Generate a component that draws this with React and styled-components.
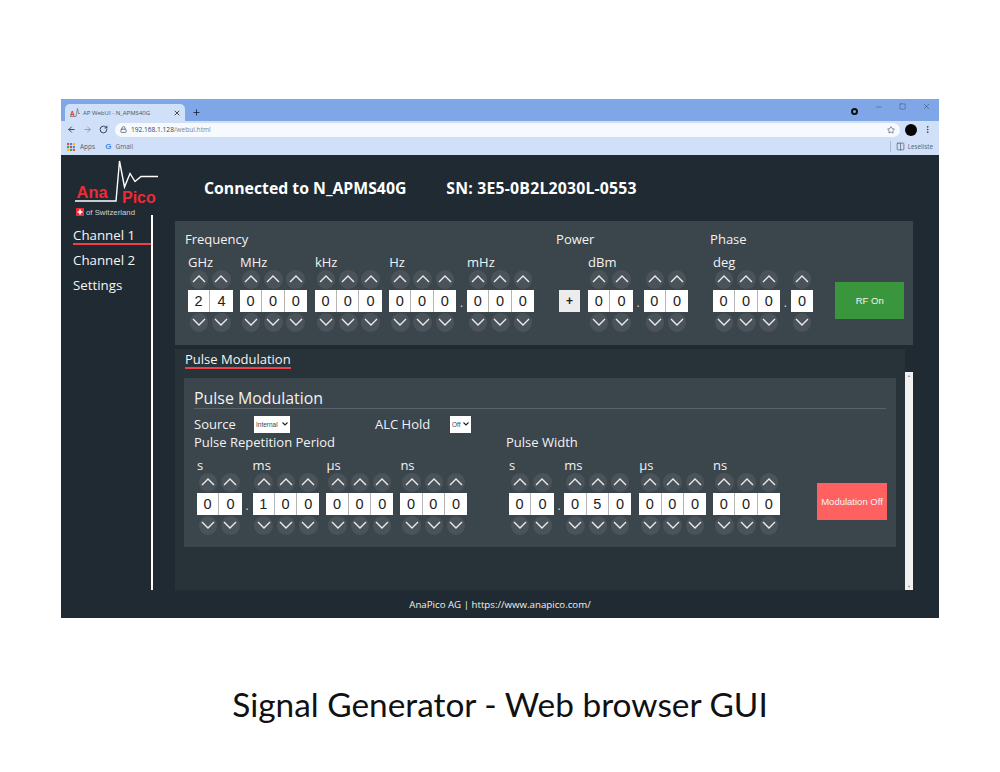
import React from "react";
import styled, { createGlobalStyle } from "styled-components";
import { ArrowLeft, ArrowRight, RotateCw, Lock, Star, X, Plus, Minus, Square, Columns2, EllipsisVertical } from "lucide-react";

const Global = createGlobalStyle`
  html, body { margin: 0; padding: 0; background: #fff; }
  body { font-family: "Open Sans", "Noto Sans", sans-serif; }
`;

const Page = styled.div`
  width: 1000px;
  height: 772px;
  padding-top: 99px;
  box-sizing: border-box;
  overflow: hidden;
`;
const Screen = styled.div`
  width: 878px;
  height: 519px;
  margin-left: 61px;
  display: flex;
  flex-direction: column;
`;
const Caption = styled.div`
  margin-top: 66px;
  text-align: center;
  font-family: Lato, "Liberation Sans", sans-serif;
  font-size: 33.4px;
  line-height: 40px;
  color: #111;
`;

/* browser chrome */
const TabStrip = styled.div`
  height: 22px;
  background: #7fa7e7;
  display: flex;
  align-items: flex-end;
  padding-left: 4px;
  color: #26364d;
  flex: none;
`;
const BrowserTab = styled.div`
  width: 120px;
  height: 17px;
  background: #cfe0f8;
  border-radius: 5px 5px 0 0;
  display: flex;
  align-items: center;
  padding: 0 4px 0 5px;
  box-sizing: border-box;
  font-size: 6px;
  color: #4a5564;
  gap: 3px;
`;
const TabTitle = styled.span`
  flex: 1;
  white-space: nowrap;
`;
const NewTab = styled.span`
  display: flex;
  margin: 0 0 4px 7px;
  color: #1c2a40;
`;
const StripSpacer = styled.div`
  flex: 1;
`;
const ExtIcon = styled.span`
  width: 3px;
  height: 3px;
  border: 2.5px solid #111;
  border-radius: 50%;
  margin: 0 17px 6px 0;
`;
const WinControls = styled.div`
  display: flex;
  align-self: flex-start;
  align-items: center;
  gap: 16px;
  margin: 3px 8px 0 0;
  color: #33465f;
`;
const AddressRow = styled.div`
  height: 17px;
  background: #cfe0f8;
  display: flex;
  align-items: center;
  padding-left: 6px;
  color: #3a4656;
  flex: none;
`;
const NavIcons = styled.div`
  display: flex;
  gap: 7px;
`;
const Omnibox = styled.div`
  width: 785px;
  height: 14px;
  margin-left: 7px;
  border-radius: 7px;
  background: #f6f9fe;
  display: flex;
  align-items: center;
  padding: 0 5px 0 5px;
  box-sizing: border-box;
  font-size: 6.6px;
  gap: 4px;
  color: #7a8492;
`;
const Host = styled.span`
  color: #3b4450;
`;
const OmniSpacer = styled.span`
  flex: 1;
`;
const Avatar = styled.span`
  width: 12px;
  height: 12px;
  border-radius: 50%;
  background: #050505;
  margin-left: 5px;
`;
const MenuDots = styled.span`
  display: flex;
  margin-left: 6px;
`;
const Bookmarks = styled.div`
  height: 17px;
  background: #cfe0f8;
  display: flex;
  align-items: center;
  padding-left: 6px;
  font-size: 6.5px;
  color: #596474;
  flex: none;
`;
const AppsGrid = styled.svg`
  width: 8px;
  height: 8px;
  margin-right: 5px;
`;
const GoogleG = styled.span`
  font-family: "Liberation Sans", sans-serif;
  font-weight: 700;
  font-size: 8px;
  color: #4285f4;
  margin: 0 4px 0 10px;
`;
const Reading = styled.div`
  margin-left: auto;
  display: flex;
  align-items: center;
  gap: 3px;
  padding-left: 5px;
  margin-right: 6px;
  border-left: 1px solid #a9b7cb;
  height: 11px;
  font-size: 6.3px;
`;

/* web app */
const AppArea = styled.div`
  flex: 1;
  background: #1f2a33;
  display: flex;
  flex-direction: column;
  color: #f2f2f2;
  min-height: 0;
`;
const AppBody = styled.div`
  flex: 1;
  display: flex;
  min-height: 0;
`;
const Side = styled.div`
  width: 114px;
  flex: none;
`;
const LogoSvg = styled.svg`
  display: block;
  width: 100px;
  height: 60px;
  overflow: visible;
`;
const SideNav = styled.nav`
  width: 92px;
  box-sizing: border-box;
  height: 375px;
  border-right: 2px solid #fff;
  padding-top: 10px;
`;
const NavItem = styled.div`
  margin: 0 0 5px 12px;
  font-size: 13.3px;
  line-height: 20px;
  height: 20px;
  box-sizing: border-box;
  color: #f5f5f5;
  ${(p) => p.$active && "border-bottom: 2px solid #f0414b;"}
`;
const Main = styled.div`
  width: 738px;
  display: flex;
  flex-direction: column;
`;
const Header = styled.div`
  height: 66px;
  display: flex;
  padding: 23px 0 0 29px;
  box-sizing: border-box;
  font-size: 15.8px;
  font-weight: 700;
  line-height: 20px;
  gap: 40px;
  color: #fff;
  white-space: nowrap;
`;
const Serial = styled.span`
  letter-spacing: 0.2px;
`;
const SourcePanel = styled.section`
  background: #3b454c;
  height: 124px;
  box-sizing: border-box;
  padding: 10px 0 0 9px;
  display: flex;
  flex: none;
`;
const Block = styled.div`
  width: ${(p) => (p.$w ? `${p.$w}px` : "auto")};
  flex: none;
`;
const Heading = styled.div`
  font-size: 13px;
  line-height: 16px;
  height: 16px;
  padding-left: ${(p) => p.$pad || 1}px;
  margin-bottom: 7px;
  white-space: nowrap;
`;
const DigitRow = styled.div`
  display: flex;
  margin-left: ${(p) => p.$ml || 4}px;
`;
const Group = styled.div`
  margin-left: ${(p) => p.$gap || 0}px;
`;
const Unit = styled.div`
  height: 16px;
  line-height: 16px;
  font-size: 13px;
  white-space: nowrap;
`;
const Digits = styled.div`
  display: flex;
`;
const DigitCol = styled.div`
  width: 22.3px;
  display: flex;
  flex-direction: column;
  align-items: center;
`;
const Spin = styled.div`
  width: 18.5px;
  height: 18.5px;
  border-radius: 50%;
  background: #4a5359;
  display: flex;
  align-items: center;
  justify-content: center;
  color: #e8e8e8;
  margin-bottom: ${(p) => (p.$up ? 1.5 : 0)}px;
  margin-top: ${(p) => (p.$up ? 0 : 1)}px;
`;
const DigitBox = styled.div`
  width: 100%;
  height: 22px;
  background: #fff;
  border-right: 1px solid #b5b5b5;
  box-sizing: border-box;
  color: #222;
  font-family: "Liberation Sans", Arial, sans-serif;
  font-size: 14.5px;
  line-height: 22px;
  text-align: center;
  ${DigitCol}:last-child > & { border-right: 0; }
`;
const Sep = styled.div`
  width: 11px;
  height: 22px;
  margin-top: 36px;
  font-size: 12px;
  line-height: 26px;
  text-align: center;
  color: #d8d8d8;
`;
const SignButton = styled.div`
  width: 21px;
  height: 22px;
  margin: 36px 8px 0 3px;
  background: #ececec;
  color: #222;
  font-family: "Liberation Sans", Arial, sans-serif;
  font-size: 12px;
  font-weight: 700;
  line-height: 22px;
  text-align: center;
  flex: none;
`;
const ActionButton = styled.div`
  width: ${(p) => p.$w}px;
  height: 37px;
  flex: none;
  align-self: flex-end;
  margin-left: ${(p) => p.$ml}px;
  margin-bottom: ${(p) => p.$mb}px;
  background: ${(p) => p.$bg};
  color: #f4f4f4;
  font-family: "Liberation Sans", Arial, sans-serif;
  font-size: ${(p) => p.$fs}px;
  line-height: 37px;
  text-align: center;
  white-space: nowrap;
`;
const Lower = styled.div`
  margin-top: 4px;
  flex: 1;
  display: flex;
  min-height: 0;
`;
const Content = styled.div`
  width: 730px;
  background: #283239;
  padding-left: 9px;
  box-sizing: border-box;
`;
const TabLine = styled.div`
  width: fit-content;
  margin-left: 1px;
  height: 20px;
  box-sizing: border-box;
  line-height: 20px;
  font-size: 13px;
  border-bottom: 2px solid #f0414b;
  color: #f5f5f5;
`;
const PulsePanel = styled.section`
  margin-top: 9px;
  width: 712px;
  height: 169px;
  box-sizing: border-box;
  background: #3b454c;
  padding: 10px 10px 0;
`;
const PulseTitle = styled.div`
  font-size: 15.9px;
  line-height: 20px;
  height: 21px;
  box-sizing: border-box;
  border-bottom: 1px solid #59626a;
`;
const OptionRow = styled.div`
  display: flex;
  align-items: center;
  height: 18px;
  margin-top: 6px;
  font-size: 13px;
`;
const OptionLabel = styled.span`
  width: ${(p) => p.$w}px;
  flex: none;
`;
const Picker = styled.div`
  width: ${(p) => p.$w}px;
  height: 17px;
  margin-right: ${(p) => p.$mr}px;
  padding: 0 2px;
  box-sizing: border-box;
  display: flex;
  align-items: center;
  justify-content: space-between;
  background: #fff;
  color: #444;
  font-family: "Liberation Sans", Arial, sans-serif;
  font-size: 6.5px;
  flex: none;
`;
const PickerMark = styled.svg`
  width: 6px;
  height: 4px;
  flex: none;
`;
const PulseColumns = styled.div`
  display: flex;
`;
const PulseCol = styled.div`
  width: ${(p) => p.$w}px;
  flex: none;
`;
const PulseHeading = styled.div`
  height: 18px;
  line-height: 18px;
  margin-bottom: 6px;
  font-size: 13px;
  white-space: nowrap;
`;
const Scrollbar = styled.div`
  width: 8px;
  margin-top: 23px;
  background: #f1f1f1;
  display: flex;
  flex-direction: column;
  justify-content: space-between;
  align-items: center;
  color: #999;
  font-size: 4px;
  line-height: 7px;
`;
const Footer = styled.div`
  height: 28px;
  line-height: 29px;
  text-align: center;
  font-size: 9.7px;
  color: #f0f0f0;
  flex: none;
`;

const Chevron = ({ up }) => (
  <svg width="14" height="8" viewBox="0 0 14 8">
    <polyline points={up ? "1,7 7,1 13,7" : "1,1 7,7 13,1"} fill="none" stroke="#ececec" strokeWidth="1.4" />
  </svg>
);

const Select = ({ value, w, mr }) => (
  <Picker $w={w} $mr={mr}>
    <span>{value}</span>
    <PickerMark viewBox="0 0 6 4">
      <polyline points="0.5,0.5 3,3 5.5,0.5" fill="none" stroke="#222" strokeWidth="1.1" />
    </PickerMark>
  </Picker>
);

function Field({ unit, n, gap }) {
  return (
    <Group $gap={gap}>
      <Unit>{unit || "\u00a0"}</Unit>
      <Digits>
        {n.map((d, i) => (
          <DigitCol key={i}>
            <Spin $up><Chevron up /></Spin>
            <DigitBox>{d}</DigitBox>
            <Spin><Chevron /></Spin>
          </DigitCol>
        ))}
      </Digits>
    </Group>
  );
}

function Logo() {
  return (
    <LogoSvg viewBox="0 0 100 60">
      <polyline points="14,46 55,46 58.5,6 63.5,32 69,18.5 74,26.5 80,21.5 97,21.5" fill="none" stroke="#fff" strokeWidth="1.4" />
      <text x="15.5" y="42.5" fill="#ee2a35" fontFamily="Liberation Sans" fontWeight="700" fontSize="16.5">Ana</text>
      <text x="61" y="47.5" fill="#ee2a35" fontFamily="Liberation Sans" fontWeight="700" fontSize="16">Pico</text>
      <rect x="15" y="53" width="8" height="8" fill="#ee2a35" />
      <path d="M19 54.5v5M16.5 57h5" stroke="#fff" strokeWidth="1.6" />
      <text x="25" y="60" fill="#cfd3d6" fontFamily="Liberation Sans" fontSize="7.8">of Switzerland</text>
    </LogoSvg>
  );
}

export default function App() {
  return (
    <Page>
      <Global />
      <Screen>
        <TabStrip>
          <BrowserTab>
            <svg width="10" height="10" viewBox="0 0 10 10">
              <path d="M0 8.5h6l1.5-8 1 5H10" fill="none" stroke="#777" strokeWidth="0.8" />
              <text x="0" y="7.5" fontSize="6.5" fontWeight="700" fill="#e0303a" fontFamily="Liberation Sans">A</text>
            </svg>
            <TabTitle>AP WebUI - N_APMS40G</TabTitle>
            <X size={8} strokeWidth={2.4} color="#222" />
          </BrowserTab>
          <NewTab><Plus size={9} strokeWidth={2.4} /></NewTab>
          <StripSpacer />
          <ExtIcon />
          <WinControls>
            <Minus size={8} strokeWidth={1.4} />
            <Square size={7} strokeWidth={1.6} />
            <X size={9} strokeWidth={1.4} />
          </WinControls>
        </TabStrip>
        <AddressRow>
          <NavIcons>
            <ArrowLeft size={9} strokeWidth={2.2} color="#1f2a3a" />
            <ArrowRight size={9} strokeWidth={2} color="#7f8a9a" />
            <RotateCw size={9} strokeWidth={2.2} color="#1f2a3a" />
          </NavIcons>
          <Omnibox>
            <Lock size={7} strokeWidth={2.4} color="#4a5564" />
            <span><Host>192.168.1.128</Host>/webui.html</span>
            <OmniSpacer />
            <Star size={8} strokeWidth={1.8} color="#3a4656" />
          </Omnibox>
          <Avatar />
          <MenuDots><EllipsisVertical size={9} strokeWidth={2.4} /></MenuDots>
        </AddressRow>
        <Bookmarks>
          <AppsGrid viewBox="0 0 9 9">
            {[["#e8453c","#4285f4","#fbbc05"],["#34a853","#e8453c","#4285f4"],["#fbbc05","#34a853","#e8453c"]].map((r, y) =>
              r.map((c, x) => <rect key={`${x}${y}`} x={x * 3.3} y={y * 3.3} width="2.4" height="2.4" fill={c} />)
            )}
          </AppsGrid>
          <span>Apps</span>
          <GoogleG>G</GoogleG>
          <span>Gmail</span>
          <Reading>
            <Columns2 size={9} strokeWidth={1.6} color="#3f4a5a" />
            <span>Leseliste</span>
          </Reading>
        </Bookmarks>
        <AppArea>
          <AppBody>
            <Side>
              <Logo />
              <SideNav>
                <NavItem $active>Channel 1</NavItem>
                <NavItem>Channel 2</NavItem>
                <NavItem>Settings</NavItem>
              </SideNav>
            </Side>
            <Main>
              <Header>
                <span>Connected to N_APMS40G</span>
                <Serial>SN: 3E5-0B2L2030L-0553</Serial>
              </Header>
              <SourcePanel>
                <Block $w={372}>
                  <Heading>Frequency</Heading>
                  <DigitRow>
                    <Field unit="GHz" n={[2, 4]} />
                    <Field unit="MHz" n={[0, 0, 0]} gap={7.4} />
                    <Field unit="kHz" n={[0, 0, 0]} gap={8} />
                    <Field unit="Hz" n={[0, 0, 0]} gap={7.4} />
                    <Sep>.</Sep>
                    <Field unit="mHz" n={[0, 0, 0]} />
                  </DigitRow>
                </Block>
                <Block $w={154}>
                  <Heading $pad={0.1}>Power</Heading>
                  <DigitRow $ml={0.1}>
                    <SignButton>+</SignButton>
                    <Field unit="dBm" n={[0, 0]} />
                    <Sep>.</Sep>
                    <Field n={[0, 0]} />
                  </DigitRow>
                </Block>
                <Block>
                  <Heading $pad={0.1}>Phase</Heading>
                  <DigitRow $ml={3}>
                    <Field unit="deg" n={[0, 0, 0]} />
                    <Sep>.</Sep>
                    <Field n={[0]} />
                  </DigitRow>
                </Block>
                <ActionButton $w={69} $ml={22} $mb={26} $bg="#3a963d" $fs={9.5}>RF On</ActionButton>
              </SourcePanel>
              <Lower>
                <Content>
                  <TabLine>Pulse Modulation</TabLine>
                  <PulsePanel>
                    <PulseTitle>Pulse Modulation</PulseTitle>
                    <OptionRow>
                      <OptionLabel $w={60}>Source</OptionLabel>
                      <Select value="Internal" w={36} mr={85} />
                      <OptionLabel $w={75}>ALC Hold</OptionLabel>
                      <Select value="Off" w={21} mr={0} />
                    </OptionRow>
                    <PulseColumns>
                      <PulseCol $w={312}>
                        <PulseHeading>Pulse Repetition Period</PulseHeading>
                        <DigitRow $ml={3}>
                          <Field unit="s" n={[0, 0]} />
                          <Sep>.</Sep>
                          <Field unit="ms" n={[1, 0, 0]} />
                          <Field unit="µs" n={[0, 0, 0]} gap={7} />
                          <Field unit="ns" n={[0, 0, 0]} gap={7} />
                        </DigitRow>
                      </PulseCol>
                      <PulseCol $w={274}>
                        <PulseHeading>Pulse Width</PulseHeading>
                        <DigitRow $ml={3}>
                          <Field unit="s" n={[0, 0]} />
                          <Sep>.</Sep>
                          <Field unit="ms" n={[0, 5, 0]} />
                          <Field unit="µs" n={[0, 0, 0]} gap={8} />
                          <Field unit="ns" n={[0, 0, 0]} gap={7} />
                        </DigitRow>
                      </PulseCol>
                      <ActionButton $w={70} $ml={37} $mb={15} $bg="#ff6161" $fs={9.5}>Modulation Off</ActionButton>
                    </PulseColumns>
                  </PulsePanel>
                </Content>
                <Scrollbar><span>▲</span><span>▼</span></Scrollbar>
              </Lower>
            </Main>
          </AppBody>
          <Footer>AnaPico AG | https://www.anapico.com/</Footer>
        </AppArea>
      </Screen>
      <Caption>Signal Generator - Web browser GUI</Caption>
    </Page>
  );
}
